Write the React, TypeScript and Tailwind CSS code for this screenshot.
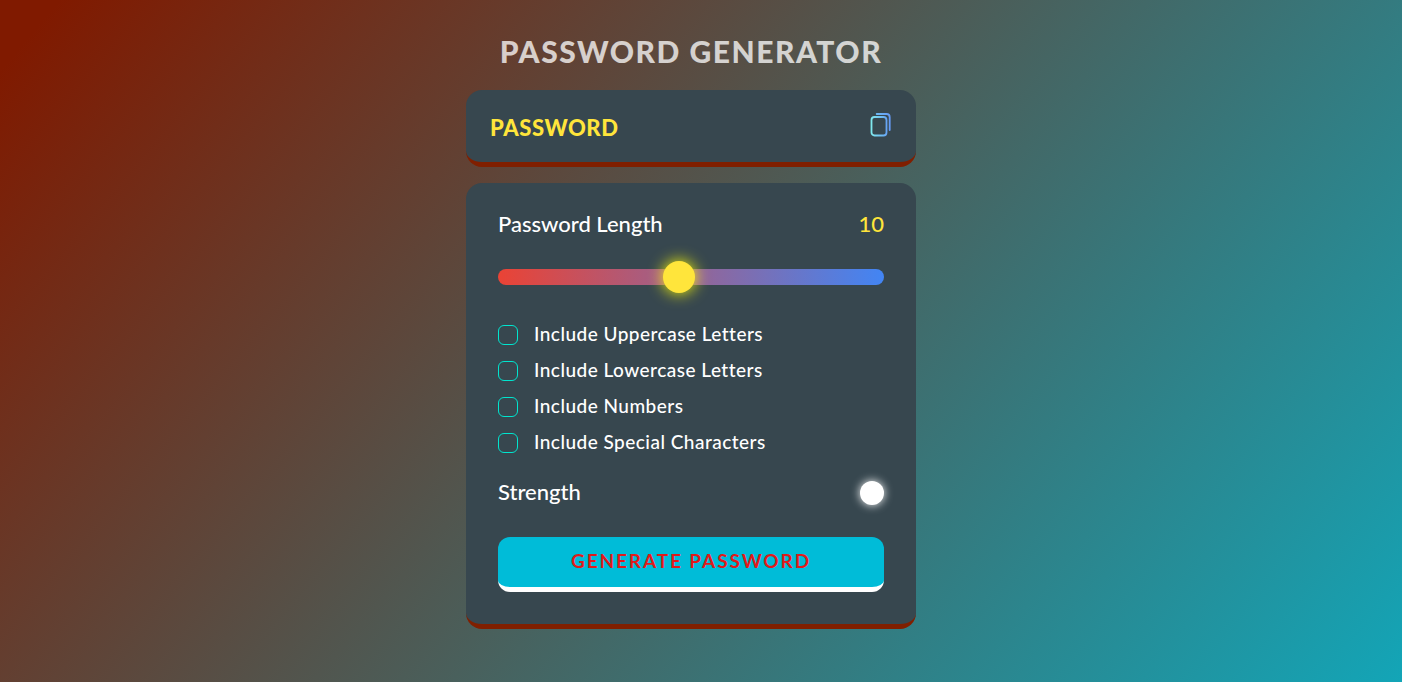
import { useState } from "react";

const OPTIONS = [
  "Include Uppercase Letters",
  "Include Lowercase Letters",
  "Include Numbers",
  "Include Special Characters",
];

function CopyIcon() {
  return (
    <svg viewBox="0 0 22 26" className="h-[26px] w-[22px]" fill="none" strokeWidth="1.8" strokeLinecap="round" aria-hidden="true">
      <defs>
        <linearGradient id="front" x1="1" y1="0" x2="17" y2="0" gradientUnits="userSpaceOnUse">
          <stop stopColor="#80eaee" />
          <stop offset="1" stopColor="#66a4f5" />
        </linearGradient>
        <linearGradient id="back" x1="6" y1="0" x2="21" y2="0" gradientUnits="userSpaceOnUse">
          <stop stopColor="#6cb9f3" />
          <stop offset="1" stopColor="#6699f5" />
        </linearGradient>
      </defs>
      <rect x="1.5" y="5" width="15" height="18.5" rx="3" stroke="url(#front)" />
      <path d="M6.7 2H16.5Q19.7 2 19.7 5.2V18" stroke="url(#back)" />
    </svg>
  );
}

export default function App() {
  const [length, setLength] = useState(10);
  const [checked, setChecked] = useState(OPTIONS.map(() => false));

  return (
    <main className="flex min-h-screen flex-col items-center bg-[linear-gradient(130deg,#801a00_3%,#13a5b7)] pt-8 pr-9 pb-12 pl-4 font-['Lato',sans-serif] text-white">
      <div className="w-full max-w-[450px]">
        <h1 className="mb-5 text-center text-[30px] leading-[38px] font-black tracking-wider whitespace-nowrap text-white/75">PASSWORD GENERATOR</h1>

        <div className="mb-4 flex h-[77px] items-center justify-between rounded-2xl border-b-[5px] border-[#801f00] bg-[#37474f] px-6">
          <input
            type="text"
            readOnly
            aria-label="Generated password"
            placeholder="PASSWORD"
            className="min-w-0 flex-1 bg-transparent pt-1 text-[22px] leading-8 font-black tracking-wide text-[#ffe53b] outline-none placeholder:text-[#ffe53b]"
          />
          <button type="button" aria-label="Copy password" className="mb-0.5 cursor-pointer">
            <CopyIcon />
          </button>
        </div>

        <div className="rounded-2xl border-b-[5px] border-[#801f00] bg-[#37474f] px-8 pt-6 pb-8">
          <div className="flex items-center justify-between text-[22px] leading-[34px] font-medium">
            <label htmlFor="length">Password Length</label>
            <output htmlFor="length" className="text-[#ffe53b]">{length}</output>
          </div>

          <input
            id="length"
            type="range"
            min={3}
            max={18}
            value={length}
            onChange={(e) => setLength(Number(e.target.value))}
            className="mt-7 block h-4 w-full cursor-pointer appearance-none rounded-full bg-[linear-gradient(90deg,#ea4335,#4285f4)] [&::-webkit-slider-thumb]:size-8 [&::-webkit-slider-thumb]:appearance-none [&::-webkit-slider-thumb]:rounded-full [&::-webkit-slider-thumb]:bg-[#ffe53b] [&::-webkit-slider-thumb]:shadow-[0_0_16px_#ff0]"
          />

          <div className="mt-8 flex flex-col">
            {OPTIONS.map((option, i) => (
              <label key={option} className="flex h-9 cursor-pointer items-center gap-4 text-[19px] font-medium tracking-wide">
                <input
                  type="checkbox"
                  checked={checked[i]}
                  onChange={() => setChecked(checked.map((c, j) => (j === i ? !c : c)))}
                  className="size-5 shrink-0 appearance-none rounded-md border border-[#00e5cf] checked:bg-[#00e5cf]"
                />
                <span className="pb-0.5">{option}</span>
              </label>
            ))}
          </div>

          <div className="mt-3 flex h-10 items-center justify-between text-[22px] font-medium">
            <span className="pb-1">Strength</span>
            <span className="size-6 rounded-full bg-white shadow-[0_0_10px_#fff]" />
          </div>

          <button
            type="button"
            className="mt-6 flex h-[55px] w-full cursor-pointer items-center justify-center rounded-xl border-b-[5px] border-white bg-[#00bcd8] pb-0.5 text-[19px] font-bold tracking-widest text-[#e01a1a]"
          >
            GENERATE PASSWORD
          </button>
        </div>
      </div>
    </main>
  );
}
